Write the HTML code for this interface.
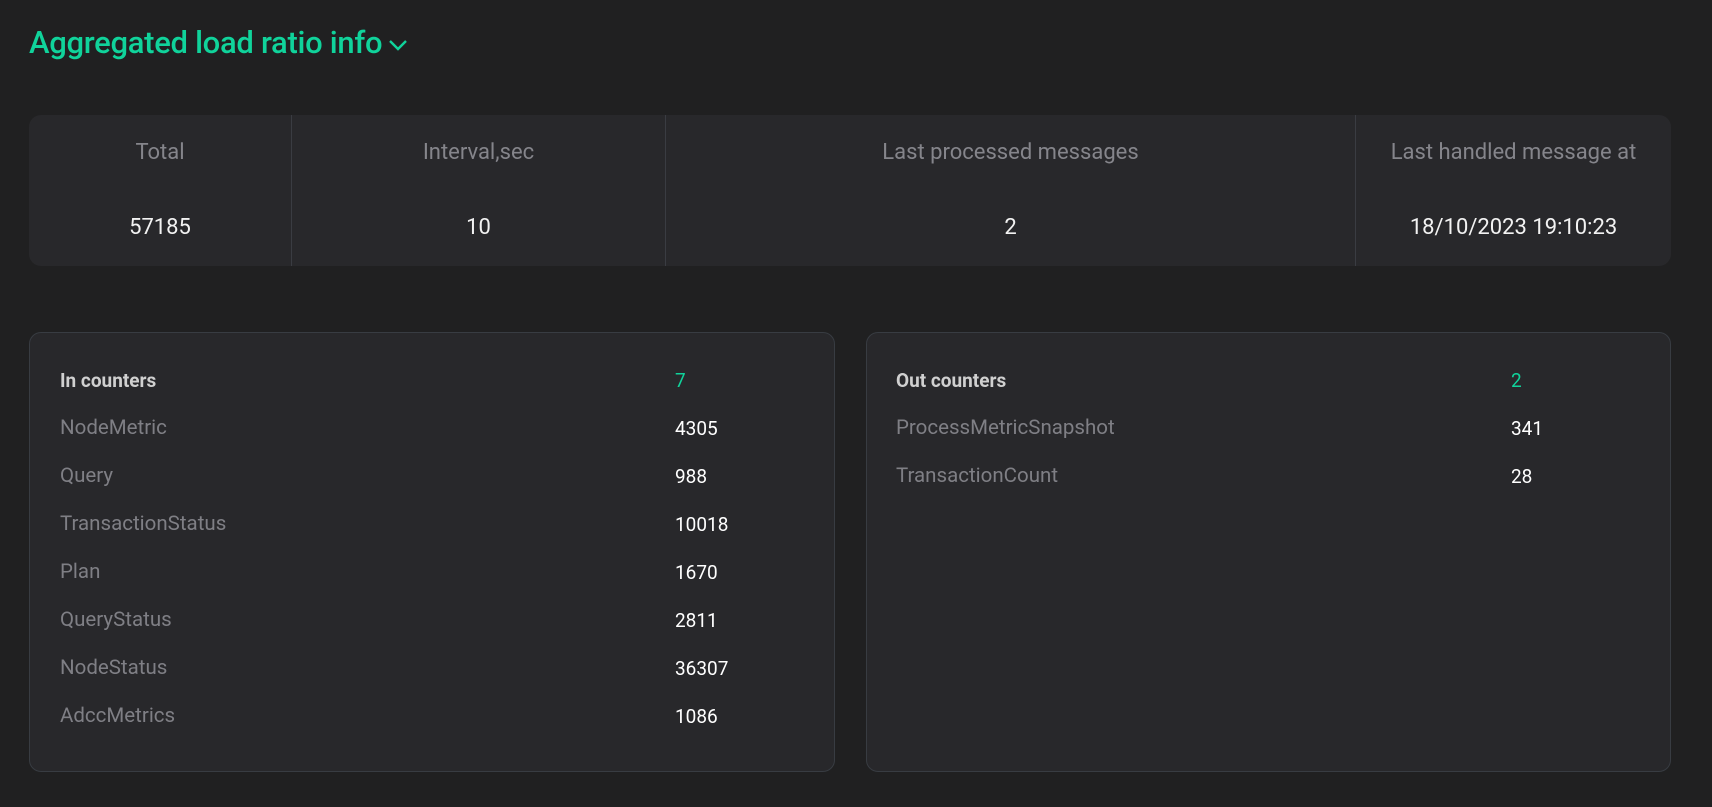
<!DOCTYPE html>
<html><head><meta charset="utf-8"><style>
*{margin:0;padding:0;box-sizing:border-box}
body{width:1712px;height:807px;background:#202021;font-family:Roboto,"Liberation Sans",sans-serif;position:relative;overflow:hidden}
.title{position:absolute;left:29px;top:24px;font-size:31px;color:#10d39b;font-weight:500;letter-spacing:-0.3px;display:flex;align-items:center}
.title svg{margin-left:6px;margin-top:4px}
.tbl{position:absolute;left:29px;top:115px;width:1642px;height:151px;background:#28282b;border-radius:12px;display:flex}
.col{position:relative;text-align:center;border-right:1px solid #3a3c42}
.col:last-child{border-right:none}
.col .h{position:absolute;left:0;right:0;top:25px;font-size:22px;color:#85858b}
.col .v{position:absolute;left:0;right:0;top:100px;font-size:22px;color:#f2f2f2}
.panel{position:absolute;top:332px;height:440px;background:#28282b;border:1px solid #383c42;border-radius:12px}
.row{position:absolute;font-size:20.5px;color:#7f7f85}
.hd{font-weight:bold;font-size:19px;color:#d0d0d0}
.val{position:absolute;font-size:19px;color:#fff}
.g{color:#10d39b}
</style></head><body>
<div class="title">Aggregated load ratio info<svg width="20" height="12" viewBox="0 0 20 12"><path d="M2 2 L10 10 L18 2" fill="none" stroke="#10d39b" stroke-width="2.4"/></svg></div>
<div class="tbl">
<div class="col" style="width:263px"><div class="h">Total</div><div class="v">57185</div></div>
<div class="col" style="width:374px"><div class="h">Interval,sec</div><div class="v">10</div></div>
<div class="col" style="width:690px"><div class="h">Last processed messages</div><div class="v">2</div></div>
<div class="col" style="width:315px"><div class="h">Last handled message at</div><div class="v">18/10/2023 19:10:23</div></div>
</div>
<div class="panel" style="left:29px;width:806px">
<div class="row hd" style="left:30px;top:36px">In counters</div><div class="val g" style="left:645px;top:36px">7</div>
<div class="row" style="left:30px;top:83px">NodeMetric</div><div class="val" style="left:645px;top:84px">4305</div>
<div class="row" style="left:30px;top:131px">Query</div><div class="val" style="left:645px;top:132px">988</div>
<div class="row" style="left:30px;top:179px">TransactionStatus</div><div class="val" style="left:645px;top:180px">10018</div>
<div class="row" style="left:30px;top:227px">Plan</div><div class="val" style="left:645px;top:228px">1670</div>
<div class="row" style="left:30px;top:275px">QueryStatus</div><div class="val" style="left:645px;top:276px">2811</div>
<div class="row" style="left:30px;top:323px">NodeStatus</div><div class="val" style="left:645px;top:324px">36307</div>
<div class="row" style="left:30px;top:371px">AdccMetrics</div><div class="val" style="left:645px;top:372px">1086</div>
</div>
<div class="panel" style="left:866px;width:805px">
<div class="row hd" style="left:29px;top:36px">Out counters</div><div class="val g" style="left:644px;top:36px">2</div>
<div class="row" style="left:29px;top:83px">ProcessMetricSnapshot</div><div class="val" style="left:644px;top:84px">341</div>
<div class="row" style="left:29px;top:131px">TransactionCount</div><div class="val" style="left:644px;top:132px">28</div>
</div>
</body></html>
